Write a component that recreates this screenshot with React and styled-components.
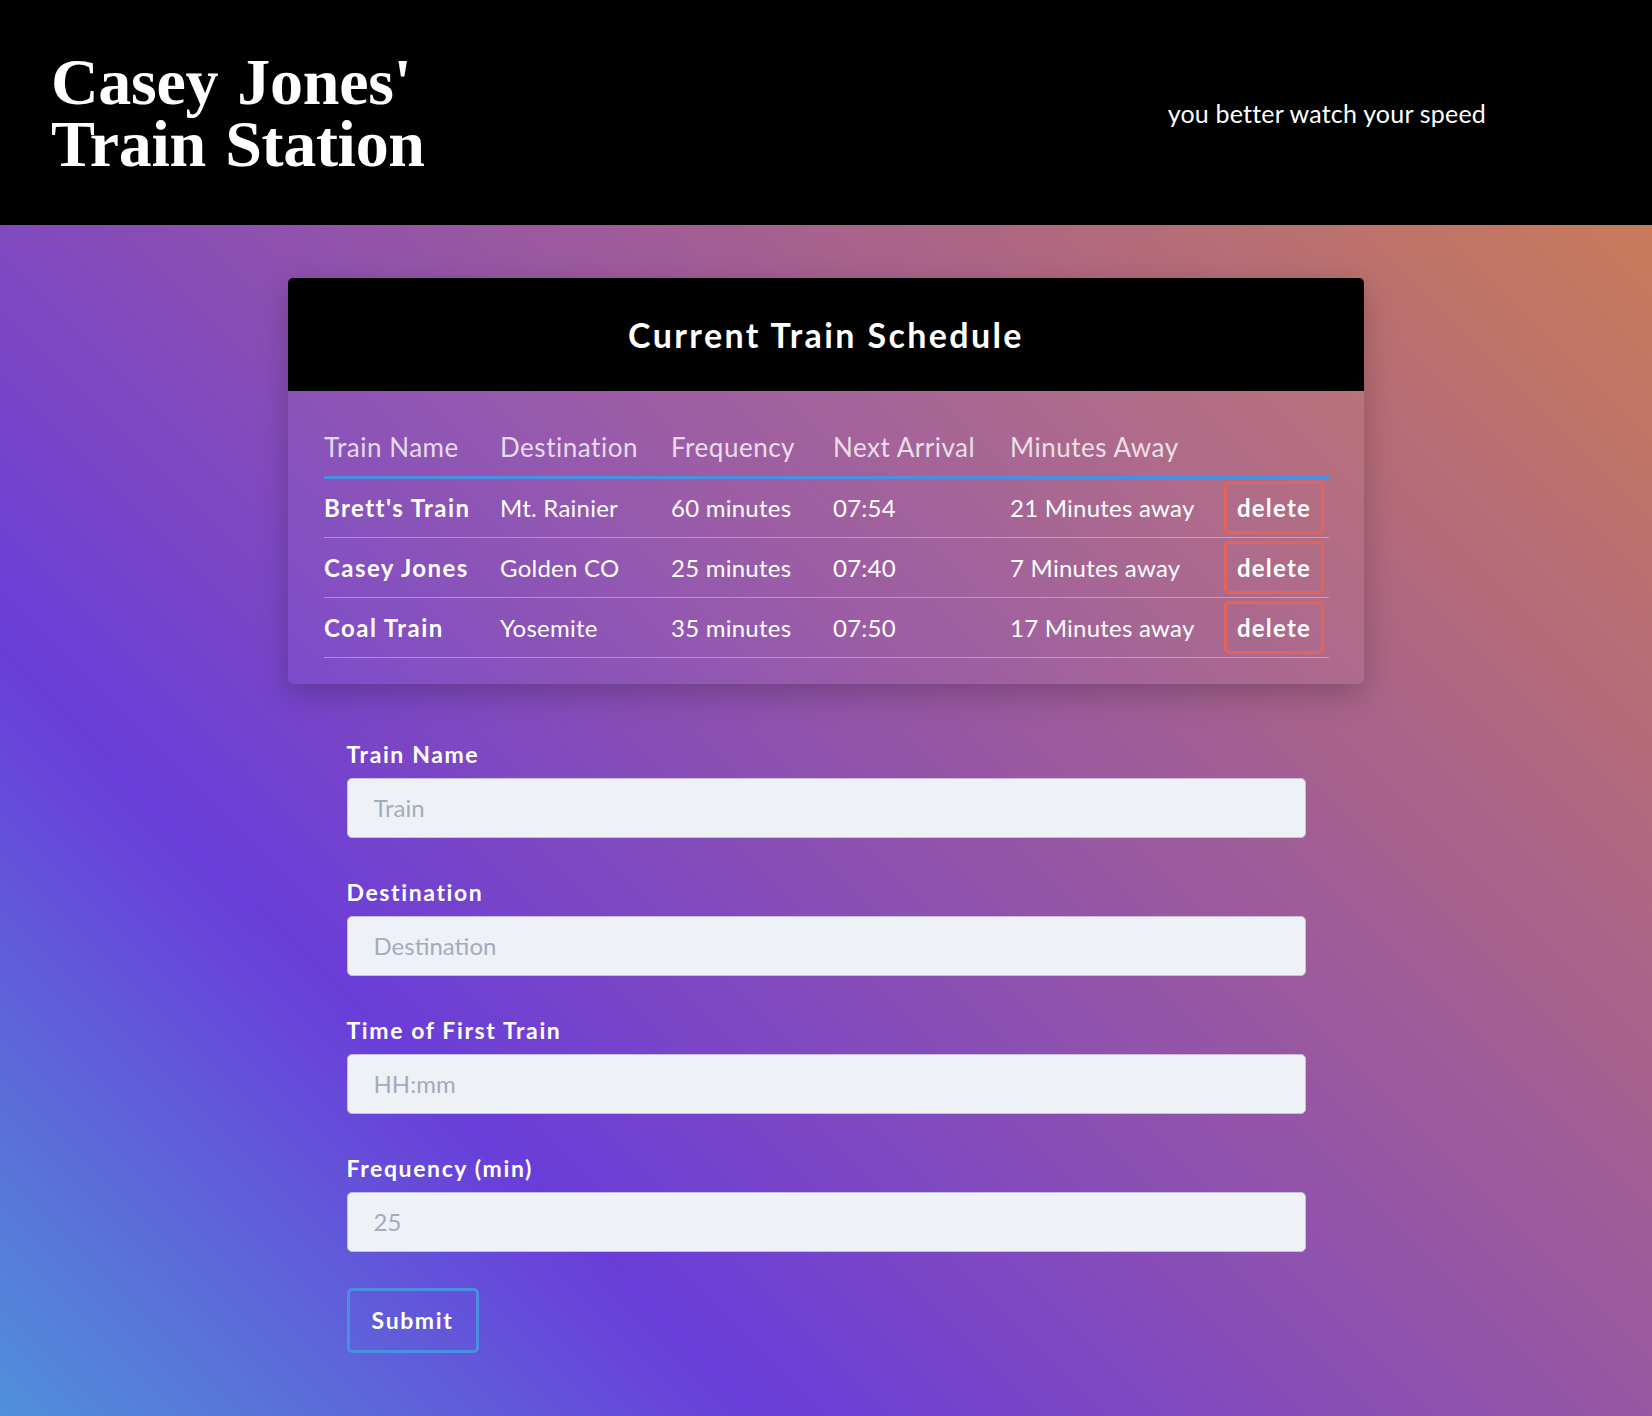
import React from 'react'
import styled, { createGlobalStyle } from 'styled-components'

const FONT = `"Lato", "Noto Sans", sans-serif`

const trains = [
  { name: "Brett's Train", dest: 'Mt. Rainier', freq: '60 minutes', next: '07:54', away: '21 Minutes away' },
  { name: 'Casey Jones', dest: 'Golden CO', freq: '25 minutes', next: '07:40', away: '7 Minutes away' },
  { name: 'Coal Train', dest: 'Yosemite', freq: '35 minutes', next: '07:50', away: '17 Minutes away' },
]

const columns = [
  { label: 'Train Name', width: 176 },
  { label: 'Destination', width: 171 },
  { label: 'Frequency', width: 162 },
  { label: 'Next Arrival', width: 177 },
  { label: 'Minutes Away', width: 214 },
  { label: '', width: 105 },
]

const fields = [
  { label: 'Train Name', placeholder: 'Train' },
  { label: 'Destination', placeholder: 'Destination' },
  { label: 'Time of First Train', placeholder: 'HH:mm' },
  { label: 'Frequency (min)', placeholder: '25' },
]

function App() {
  return (
    <>
      <GlobalStyle />
      <Page>
        <Header>
          <Title>
            Casey Jones'
            <br />
            Train Station
          </Title>
          <Tagline>you better watch your speed</Tagline>
        </Header>

        <Card>
          <CardHeader>
            <CardTitle>Current Train Schedule</CardTitle>
          </CardHeader>
          <CardBody>
            <Table>
              <thead>
                <tr>
                  {columns.map((c, i) => (
                    <Th key={i} $width={c.width}>{c.label}</Th>
                  ))}
                </tr>
              </thead>
              <tbody>
                {trains.map((t) => (
                  <tr key={t.name}>
                    <Td $bold>{t.name}</Td>
                    <Td>{t.dest}</Td>
                    <Td>{t.freq}</Td>
                    <Td>{t.next}</Td>
                    <Td>{t.away}</Td>
                    <Td>
                      <DeleteButton>delete</DeleteButton>
                    </Td>
                  </tr>
                ))}
              </tbody>
            </Table>
          </CardBody>
        </Card>

        <Form onSubmit={(e) => e.preventDefault()}>
          {fields.map((f) => (
            <Field key={f.label}>
              <Label>{f.label}</Label>
              <Input type="text" placeholder={f.placeholder} />
            </Field>
          ))}
          <SubmitButton type="submit">Submit</SubmitButton>
        </Form>
      </Page>
    </>
  )
}

const GlobalStyle = createGlobalStyle`
  body {
    margin: 0;
    font-family: ${FONT};
    color: white;
  }
  * { box-sizing: border-box; }
`

const Page = styled.div`
  min-height: 100vh;
  padding-bottom: 60px;
  background: linear-gradient(45deg, #5090da 0%, #6a3dd9 25%, #9a58a0 55%, #d2824c 100%);
`

const Header = styled.header`
  height: 225px;
  background: #000;
  display: flex;
  align-items: center;
  justify-content: space-between;
  padding: 0 166px 0 51px;
`

const Title = styled.h1`
  margin: 0;
  font-family: "Liberation Serif", serif;
  font-weight: 700;
  font-size: 66px;
  line-height: 62px;
  letter-spacing: -0.3px;
  word-spacing: 3px;
  color: white;
`

const Tagline = styled.p`
  margin: 0;
  font-size: 25px;
  letter-spacing: 0.2px;
  color: white;
`

const Card = styled.section`
  width: 1076px;
  margin: 53px auto 0;
  border-radius: 5px;
  overflow: hidden;
  background: rgba(255, 255, 255, 0.04);
  box-shadow: 0 10px 30px rgba(0, 0, 0, 0.22);
`

const CardHeader = styled.div`
  height: 113px;
  background: #000;
  display: flex;
  align-items: center;
  justify-content: center;
`

const CardTitle = styled.h2`
  margin: 0;
  font-size: 34px;
  font-weight: 700;
  letter-spacing: 0.07em;
`

const CardBody = styled.div`
  padding: 27px 35px 26px 36px;
`

const Table = styled.table`
  width: 100%;
  border-collapse: collapse;
  table-layout: fixed;
`

const Th = styled.th`
  width: ${(p) => p.$width}px;
  height: 59px;
  padding: 0;
  text-align: left;
  font-weight: 400;
  font-size: 26px;
  letter-spacing: 0.02em;
  color: rgba(255, 255, 255, 0.8);
  border-bottom: 3px solid #4a90e2;
  vertical-align: middle;
`

const Td = styled.td`
  height: 60px;
  padding: 0;
  font-size: 24px;
  font-weight: ${(p) => (p.$bold ? 700 : 400)};
  letter-spacing: ${(p) => (p.$bold ? '0.06em' : '0.01em')};
  border-bottom: 1px solid rgba(255, 255, 255, 0.35);
  vertical-align: middle;
  white-space: nowrap;
`

const DeleteButton = styled.button`
  width: 100px;
  height: 53px;
  border: 3px solid #e2645a;
  border-radius: 5px;
  background: transparent;
  color: white;
  font-family: ${FONT};
  font-weight: 700;
  font-size: 24px;
  letter-spacing: 0.05em;
  cursor: pointer;
`

const Form = styled.form`
  width: 959px;
  margin: 55px auto 0;
`

const Field = styled.div`
  margin-bottom: 39px;
  &:last-of-type {
    margin-bottom: 36px;
  }
`

const Label = styled.label`
  display: block;
  font-weight: 700;
  font-size: 23px;
  line-height: 30px;
  letter-spacing: 0.07em;
  margin-bottom: 9px;
  color: white;
`

const Input = styled.input`
  display: block;
  width: 100%;
  height: 60px;
  padding: 0 26px;
  background: #eef2f7;
  border: 1px solid #c9bde0;
  border-radius: 5px;
  font-family: ${FONT};
  font-size: 24px;
  color: #333;
  &::placeholder {
    color: #a3acbb;
  }
`

const SubmitButton = styled.button`
  width: 132px;
  height: 65px;
  border: 3px solid #4a90e2;
  border-radius: 5px;
  background: transparent;
  color: white;
  font-family: ${FONT};
  font-weight: 700;
  font-size: 23px;
  letter-spacing: 0.07em;
  cursor: pointer;
`

export default App
